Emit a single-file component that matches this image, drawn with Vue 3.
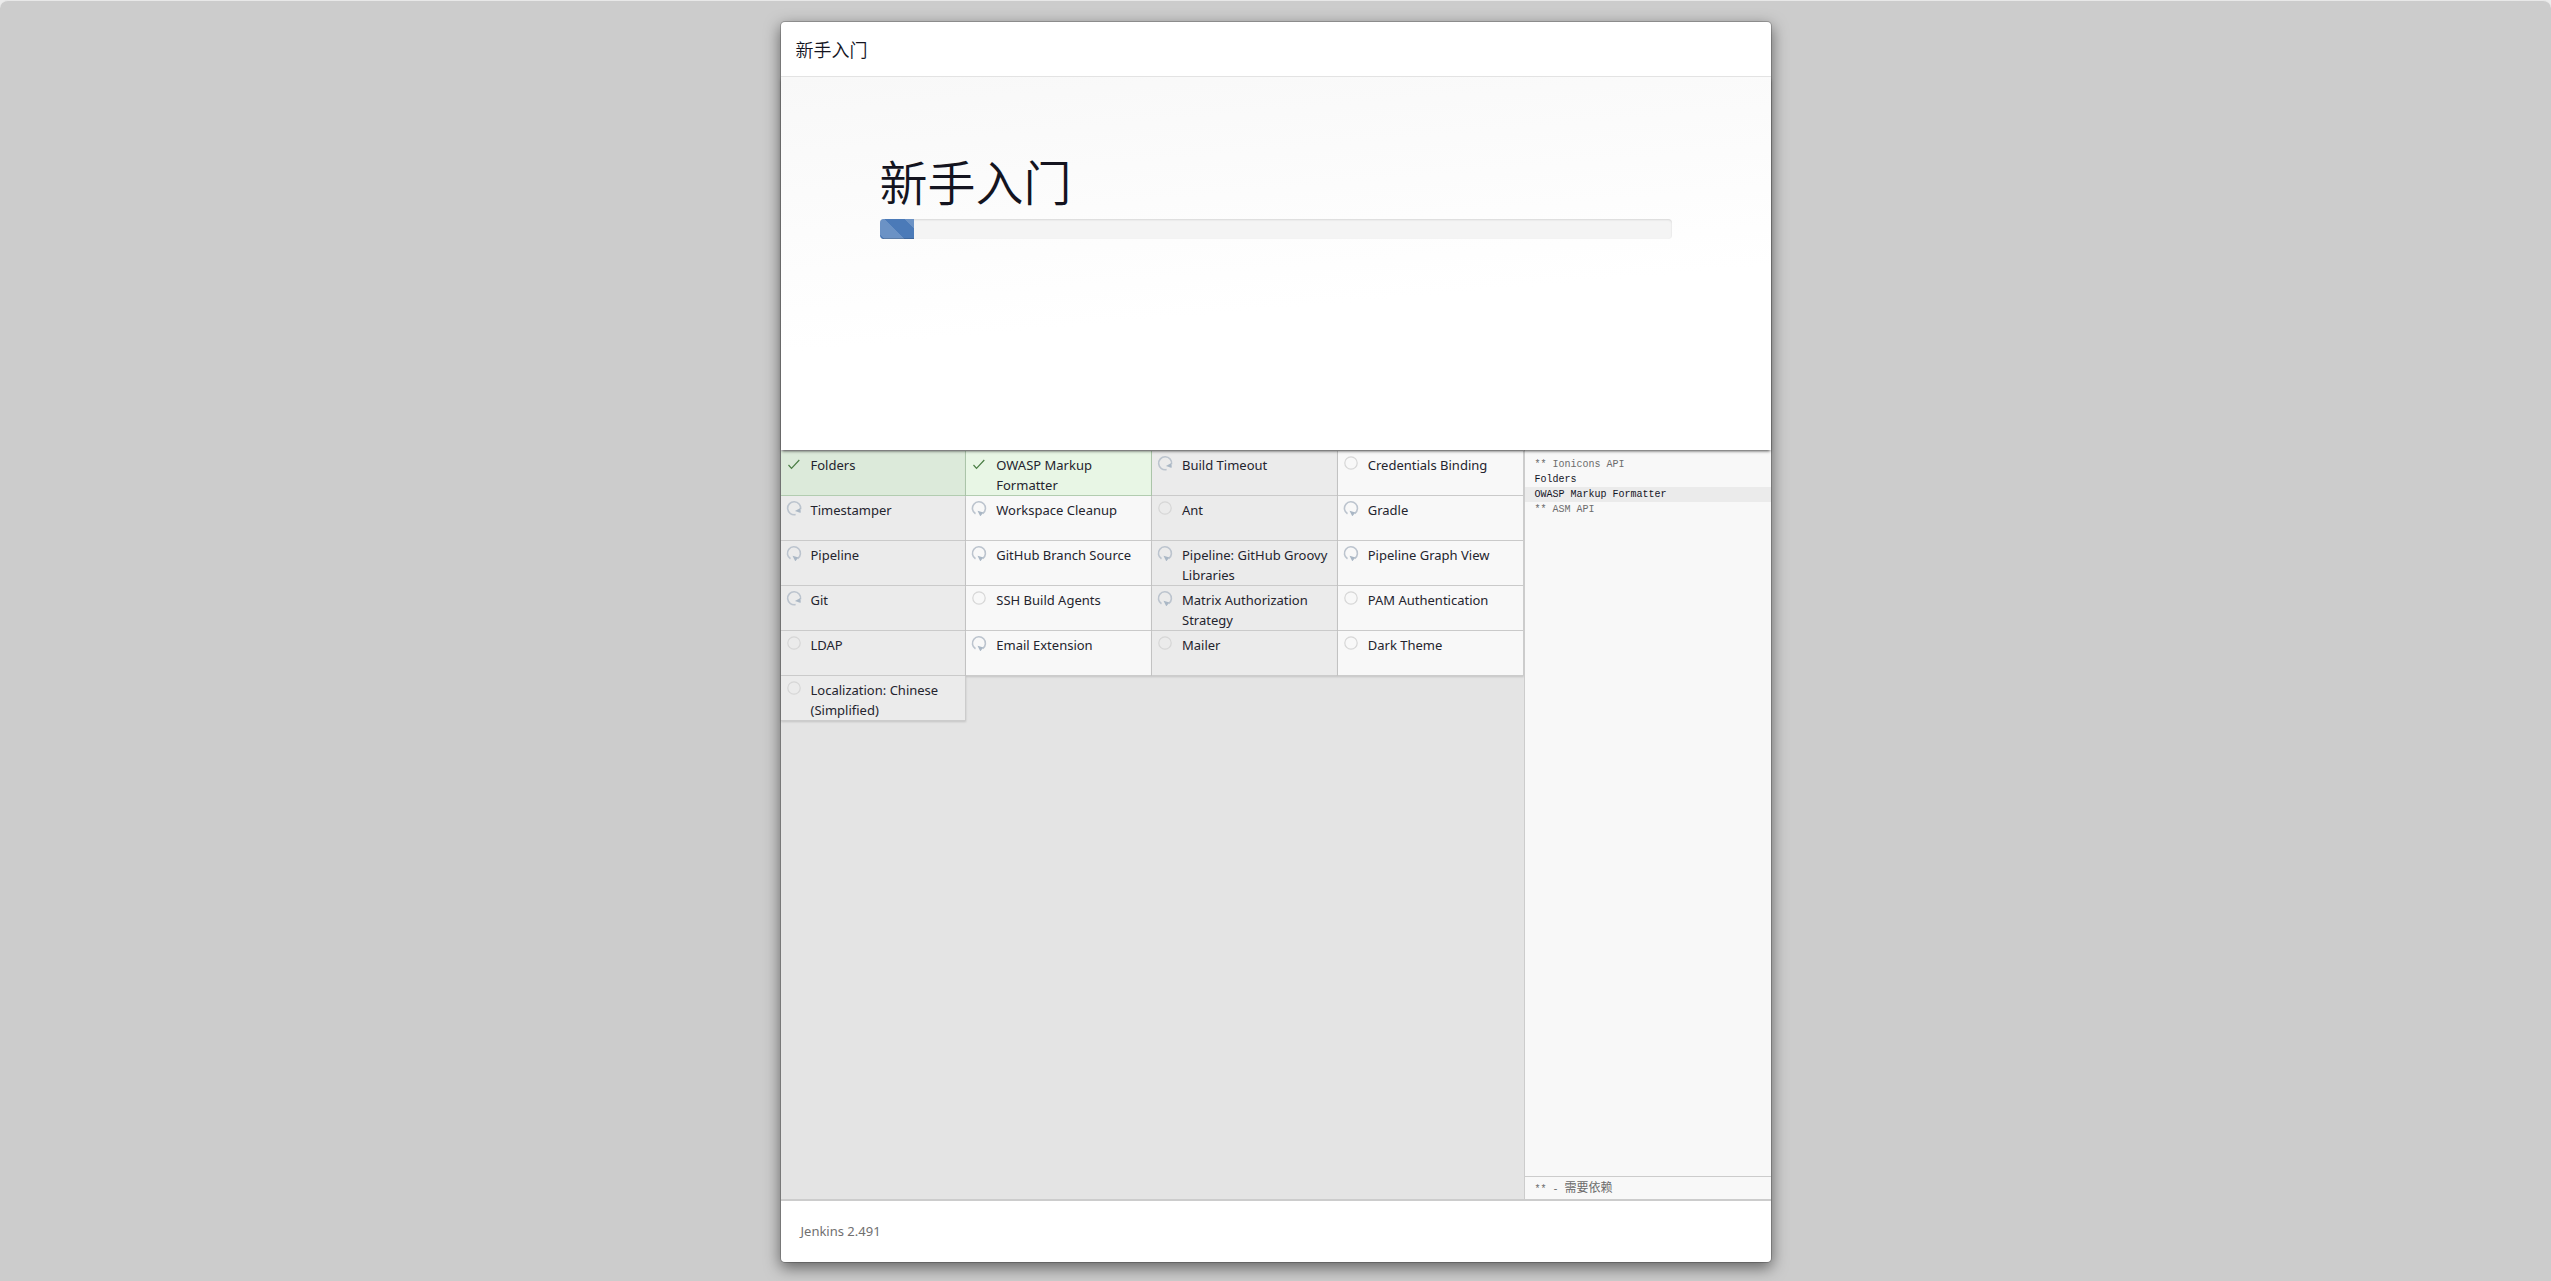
<script setup>
const plugins = [
  { name: 'Folders', state: 'success' },
  { name: 'OWASP Markup Formatter', state: 'success' },
  { name: 'Build Timeout', state: 'waiting', turned: true },
  { name: 'Credentials Binding', state: 'pending' },
  { name: 'Timestamper', state: 'waiting', turned: true },
  { name: 'Workspace Cleanup', state: 'waiting' },
  { name: 'Ant', state: 'pending' },
  { name: 'Gradle', state: 'waiting' },
  { name: 'Pipeline', state: 'waiting' },
  { name: 'GitHub Branch Source', state: 'waiting' },
  { name: 'Pipeline: GitHub Groovy Libraries', state: 'waiting' },
  { name: 'Pipeline Graph View', state: 'waiting' },
  { name: 'Git', state: 'waiting', turned: true },
  { name: 'SSH Build Agents', state: 'pending' },
  { name: 'Matrix Authorization Strategy', state: 'waiting' },
  { name: 'PAM Authentication', state: 'pending' },
  { name: 'LDAP', state: 'pending' },
  { name: 'Email Extension', state: 'waiting' },
  { name: 'Mailer', state: 'pending' },
  { name: 'Dark Theme', state: 'pending' },
  { name: 'Localization: Chinese (Simplified)', state: 'pending' },
]

const log = [
  { text: '** Ionicons API', dependency: true },
  { text: 'Folders' },
  { text: 'OWASP Markup Formatter', current: true },
  { text: '** ASM API', dependency: true },
]

const progress = 4.3
</script>

<template>
  <div class="page">
    <section class="dialog">
      <header class="dialog-header">
        <h4>新手入门</h4>
      </header>

      <div class="hero">
        <h1>新手入门</h1>
        <div class="progress" role="progressbar" :aria-valuenow="progress" aria-valuemin="0" aria-valuemax="100">
          <div class="bar" :style="{ width: progress + '%' }"></div>
        </div>
      </div>

      <main class="install">
        <div class="plugins">
          <ul class="grid">
            <li v-for="p in plugins" :key="p.name" :class="['plugin', p.state]">
              <svg v-if="p.state === 'success'" class="icon" viewBox="0 0 16 16" aria-hidden="true">
                <path d="M2.500 10l3 3.300L13.300 5" fill="none" stroke="#4a7d44" stroke-width="1.200" />
              </svg>
              <svg v-else-if="p.state === 'waiting'" :class="['icon', { turned: p.turned }]" viewBox="0 0 16 16" aria-hidden="true">
                <path d="M4.500 13.800A6.500 6.500 0 1 1 11.800 13.500" fill="none" stroke="#bcc4ce" stroke-width="1.600" />
                <path d="M6.500 10.800l6 1.700-3.200 3.800z" fill="#aab7c5" />
              </svg>
              <svg v-else class="icon" viewBox="0 0 16 16" aria-hidden="true">
                <circle cx="8" cy="8" r="6.200" fill="none" stroke="#d6d6d6" stroke-width="1.200" />
              </svg>
              <span class="name">{{ p.name }}</span>
            </li>
          </ul>
        </div>

        <aside class="log">
          <div class="log-lines">
            <div v-for="l in log" :key="l.text" :class="['line', { dependency: l.dependency, current: l.current }]">{{ l.text }}</div>
          </div>
          <div class="legend">** - <span>需要依赖</span></div>
        </aside>
      </main>

      <footer class="dialog-footer">Jenkins 2.491</footer>
    </section>
  </div>
</template>

<style>
body {
  background: #ececec;
}
</style>

<style scoped>
* {
  box-sizing: border-box;
}

.page {
  display: flex;
  justify-content: center;
  min-height: 100vh;
  padding: 20px 0 18px;
  border-top: 1px solid #e8e8e8;
  border-radius: 8px 8px 0 0;
  background: #ccc;
  color: #14141f;
  font-family: "Noto Sans", "Noto Sans CJK SC", sans-serif;
  font-size: 13px;
  line-height: 20px;
}

.dialog {
  display: flex;
  flex-direction: column;
  width: 100%;
  max-width: 992px;
  border: 1px solid rgba(0, 0, 0, 0.2);
  border-radius: 5px;
  background: #fff;
  background-clip: padding-box;
  box-shadow: 0 5px 15px rgba(0, 0, 0, 0.5);
}

.dialog-header {
  padding: 14px 15px;
  border-bottom: 1px solid #e5e5e5;
}

h4 {
  margin: 0;
  font-family: "Noto Sans CJK SC", sans-serif;
  font-size: 18px;
  font-weight: 350;
  line-height: 26px;
}

.hero {
  position: relative;
  z-index: 1;
  min-height: 373px;
  padding: 76px 10% 0;
  background: linear-gradient(175deg, #f8f8f8, #fff 60%);
  box-shadow: 0 2px 3px -1px rgba(0, 0, 0, 0.7);
}

h1 {
  margin: 0 0 12px;
  font-family: "Noto Sans CJK SC", sans-serif;
  font-size: 48px;
  font-weight: 350;
  line-height: 54px;
}

.progress {
  height: 20px;
  overflow: hidden;
  border-radius: 4px;
  background: #f4f4f4;
  box-shadow: inset 0 1px 2px rgba(0, 0, 0, 0.12);
}

.bar {
  height: 100%;
  background: #4b7ab8 linear-gradient(45deg, rgba(255, 255, 255, 0.18) 25%, transparent 25%, transparent 50%, rgba(255, 255, 255, 0.18) 50%, rgba(255, 255, 255, 0.18) 75%, transparent 75%) 25px 0 / 40px 40px;
  box-shadow: inset 0 -1px 0 rgba(0, 0, 0, 0.15);
}

.install {
  display: flex;
  flex: 1;
  border-bottom: 2px solid #ccc;
}

.plugins {
  flex: 1;
  background: #e4e4e4;
}

.grid {
  display: grid;
  grid-template-columns: repeat(4, 1fr);
  margin: 0;
  padding: 1px 0 0;
  list-style: none;
}

.plugin {
  display: flex;
  gap: 9px;
  height: 45px;
  padding: 4px 0 0 5px;
  border: solid #ccc;
  border-width: 0 1px 1px 0;
  background: #f8f8f8;
  box-shadow: 0 1px 2px rgba(0, 0, 0, 0.15);
}

.plugin:nth-child(odd) {
  background: #ebebeb;
}

.plugin.success {
  border-color: #b4ceb2;
  background: #e8f6e5;
}

.plugin.success:nth-child(odd) {
  background: #dceada;
}

.name {
  color: #24242e;
}

.icon {
  flex: none;
  width: 16px;
  height: 16px;
}

.turned {
  transform: rotate(-45deg);
}

.log {
  display: flex;
  flex-direction: column;
  width: 247px;
  border-left: 1px solid #ccc;
  background: #f8f8f8;
  font-family: "Liberation Mono", "Noto Sans CJK SC", monospace;
  font-size: 10px;
  line-height: 15px;
}

.log-lines {
  flex: 1;
  padding-top: 7px;
}

.line {
  padding: 0 10px;
}

.current {
  background: #ebebeb;
}

.dependency,
.legend {
  color: #6c6c6c;
}

.legend {
  padding: 5px 10px 2px;
  border-top: 1px solid #ccc;
}

.legend span {
  font-size: 12px;
}

.dialog-footer {
  padding: 20px 20px 21px;
  color: #707070;
}
</style>
